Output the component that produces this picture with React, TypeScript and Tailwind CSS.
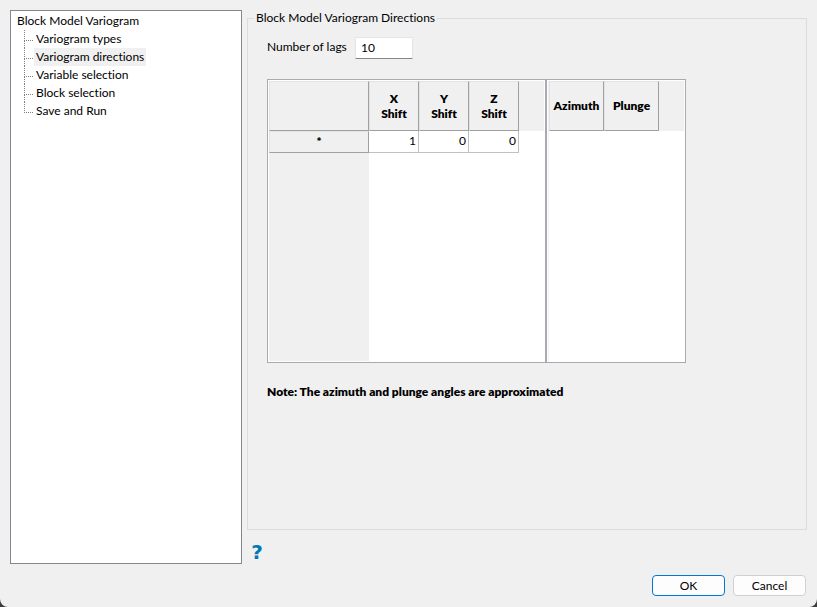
const pages = [
  'Variogram types',
  'Variogram directions',
  'Variable selection',
  'Block selection',
  'Save and Run',
];

function PageTree() {
  return (
    <nav aria-label="Pages" className="w-[232px] shrink-0 border border-[#828790] bg-white py-px pl-1">
      <button type="button" className="block h-[18px] px-[2px]">Block Model Variogram</button>
      <ul className="pl-[9px]">
        {pages.map((page, i) => (
          <li key={page} className="flex h-[18px]">
            <span className="flex w-[9px] flex-col">
              <span className="h-[11px] border-b border-l border-dotted border-[#808080]" />
              {i < pages.length - 1 && <span className="flex-1 border-l border-dotted border-[#808080]" />}
            </span>
            <button
              type="button"
              aria-current={i === 1 ? 'page' : undefined}
              className={i === 1 ? 'ml-px bg-[#f0f0f0] px-[2px]' : 'ml-px px-[2px]'}
            >
              {page}
            </button>
          </li>
        ))}
      </ul>
    </nav>
  );
}

const headCell =
  'border-r border-b border-l border-t border-t-[#e3e3e3] border-l-[#e3e3e3] border-r-[#a0a0a0] border-b-[#a0a0a0] bg-[#f0f0f0] p-0 pb-px text-center font-extrabold leading-[15px]';
const valueCell = 'border-r border-b border-[#c0c0c0] p-0 pr-[2px] pb-[2px] text-right';

function ShiftGrid() {
  return (
    <div className="flex w-[277px] flex-col p-px">
      <table className="w-full table-fixed border-separate border-spacing-0">
        <colgroup>
          <col className="w-[100px]" />
          <col className="w-[50px]" />
          <col className="w-[50px]" />
          <col className="w-[50px]" />
          <col />
        </colgroup>
        <thead>
          <tr className="h-[50px]">
            <td className={headCell} />
            <th className={headCell}>X<br />Shift</th>
            <th className={headCell}>Y<br />Shift</th>
            <th className={headCell}>Z<br />Shift</th>
            <td className="bg-[#f0f0f0] p-0" />
          </tr>
        </thead>
        <tbody>
          <tr className="h-[22px]">
            <th scope="row" className={headCell}>*</th>
            <td className={valueCell}>1</td>
            <td className={valueCell}>0</td>
            <td className={valueCell}>0</td>
            <td className="p-0" />
          </tr>
        </tbody>
      </table>
      <div className="w-[100px] flex-1 bg-[#f0f0f0]" />
    </div>
  );
}

function AngleGrid() {
  return (
    <div className="flex flex-1 flex-col border-l-2 border-[#a9a9b0] p-px">
      <div className="flex-1 border-l border-[#f0f0f0]">
        <table className="w-full table-fixed border-separate border-spacing-0">
          <colgroup>
            <col className="w-[55px]" />
            <col className="w-[55px]" />
            <col />
          </colgroup>
          <thead>
            <tr className="h-[50px]">
              <th className={headCell}>Azimuth</th>
              <th className={headCell}>Plunge</th>
              <td className="bg-[#f0f0f0] p-0" />
            </tr>
          </thead>
        </table>
      </div>
    </div>
  );
}

export default function App() {
  return (
    <div className="bg-[#3c3c3c] font-['Lato','Open_Sans',sans-serif] text-[12px] leading-[18px] text-black [font-variant-ligatures:none]">
      <main className="flex min-h-screen flex-col rounded-b-lg bg-[#f0f0f0] px-[10px] pt-[10px] pb-[11px]">
        <div className="flex flex-1 gap-[5px]">
          <PageTree />
          <div className="flex flex-1 flex-col">
            <fieldset className="flex-1 border border-[#dcdcdc] px-[19px]">
              <legend className="-ml-[13px] px-[2px] leading-[16px]">Block Model Variogram Directions</legend>
              <div className="mt-[11px] flex items-center gap-[5px]">
                <label htmlFor="lags" className="w-[83px] pb-[3px]">Number of lags</label>
                <input
                  id="lags"
                  defaultValue="10"
                  className="h-[22px] w-[58px] border border-[#e5e5e5] border-b-[#868686] bg-white px-[5px] pb-[2px] outline-none"
                />
              </div>
              <div className="mt-5 flex h-[284px] w-[419px] border border-[#a9a9b0] bg-white">
                <ShiftGrid />
                <AngleGrid />
              </div>
              <p className="mt-5 font-extrabold">Note: The azimuth and plunge angles are approximated</p>
            </fieldset>
            <button
              type="button"
              aria-label="Help"
              className="mt-3 mb-[2px] ml-[2px] h-5 w-4 text-center font-['DejaVu_Sans',sans-serif] text-[20px] leading-5 font-bold text-[#0078b0]"
            >
              ?
            </button>
          </div>
        </div>
        <div className="mt-[11px] flex justify-end gap-2 pr-px">
          <button type="button" className="h-[21px] w-[73px] rounded border border-[#0078d4] bg-[#fdfdfd]">OK</button>
          <button type="button" className="h-[21px] w-[73px] rounded border border-[#d0d0d0] bg-[#fdfdfd]">Cancel</button>
        </div>
      </main>
    </div>
  );
}
